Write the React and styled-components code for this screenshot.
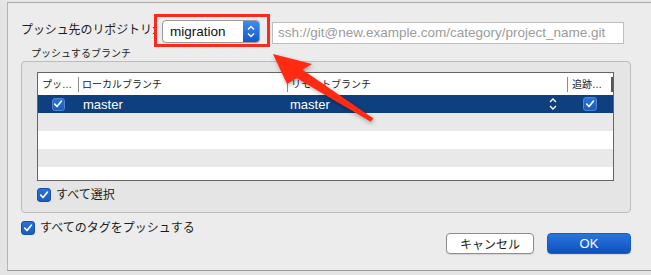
import React from 'react';
import styled, {createGlobalStyle} from 'styled-components';

const Font = `"Liberation Sans", "Noto Sans CJK JP", sans-serif`;

const Global = createGlobalStyle`
	html, body {
		margin: 0;
		padding: 0;
		background: #e6e6e6;
		overflow: hidden;
	}
	* {
		box-sizing: border-box;
	}
`;

const Screen = styled.div`
	position: relative;
	width: 651px;
	height: 275px;
	background: #e4e4e4;
	font-family: ${Font};
	color: #1c1c1c;
`;
const Dialog = styled.div`
	margin-left: 7px;
	margin-top: 2px;
	height: 269px;
	background: #ececec;
	border-top: 1px solid #a9a9a9;
	border-left: 1px solid #b4b4b4;
	border-bottom: 1px solid #9a9a9a;
	padding: 11px 20px 0 13px;
	display: flex;
	flex-direction: column;
`;
const TopRow = styled.div`
	display: flex;
	align-items: flex-start;
	height: 33px;
`;
const Label = styled.div`
	width: 134px;
	margin-right: -1px;
	font-size: 12px;
	line-height: 33px;
	letter-spacing: -0.1px;
	white-space: nowrap;
`;
const Highlight = styled.div`
	position: relative;
	width: 116px;
	height: 33px;
	border: 3px solid #fb2a1c;
	padding: 3px 7px 1px 5px;
`;
const Popup = styled.div`
	display: flex;
	height: 23px;
	background: #fff;
	border: 1px solid #9c9c9c;
	border-radius: 4px;
	overflow: hidden;
	box-shadow: 0 1px 1px rgba(0,0,0,0.08);
`;
const PopupText = styled.div`
	flex: 1;
	padding-left: 7px;
	font-size: 13.5px;
	line-height: 21px;
	color: #111;
`;
const PopupStepper = styled.div`
	width: 16px;
	display: flex;
	align-items: center;
	justify-content: center;
	background: linear-gradient(#3d8cf2, #1458c8);
`;
const UrlField = styled.div`
	margin-left: 2px;
	margin-top: 8px;
	width: 352px;
	height: 22px;
	background: #fff;
	border: 1px solid #bdbdbd;
	padding-left: 5px;
	font-size: 13.5px;
	line-height: 20px;
	color: #9b9b9b;
	white-space: nowrap;
	overflow: hidden;
`;
const SectionTitle = styled.div`
	margin-left: 10px;
	font-size: 10px;
	line-height: 14px;
	color: #222;
`;
const Group = styled.div`
	height: 152px;
	background: #e5e5e5;
	border: 1px solid #bcbcbc;
	border-radius: 4px;
	padding: 10px 16px 0 15px;
	display: flex;
	flex-direction: column;
	gap: 7px;
`;
const Table = styled.div`
	height: 109px;
	background: #fff;
	border: 1px solid #656565;
	overflow: hidden;
`;
const Columns = `40px 209px 280px 1fr`;
const HeaderRow = styled.div`
	display: grid;
	grid-template-columns: ${Columns};
	height: 22px;
	align-items: center;
	background: #fff;
`;
const HeaderCell = styled.div`
	height: 15px;
	line-height: 15px;
	font-size: 10px;
	color: #222;
	padding-left: ${p => p.$pad || 3}px;
	border-left: ${p => p.$divider ? '1px solid #8c8c8c' : 'none'};
	border-right: ${p => p.$end ? '2px solid #555' : 'none'};
	white-space: nowrap;
	overflow: hidden;
`;
const Row = styled.div`
	display: grid;
	grid-template-columns: ${Columns};
	height: 18px;
	align-items: center;
	background: ${p => p.$selected ? '#0e3f7e' : p.$alt ? '#e9e9e9' : '#fff'};
	color: ${p => p.$selected ? '#fff' : '#1c1c1c'};
`;
const Cell = styled.div`
	display: flex;
	align-items: center;
	justify-content: ${p => p.$center ? 'center' : 'space-between'};
	padding-left: ${p => p.$center ? 0 : p.$pad || 4}px;
	padding-right: ${p => p.$right || 0}px;
	font-size: 13px;
	height: 18px;
`;
const Box = styled.div`
	width: ${p => p.$size || 14}px;
	height: ${p => p.$size || 14}px;
	border-radius: 3px;
	background: linear-gradient(#2a71d6, #1a5cc0);
	border: 1px solid ${p => p.$light ? '#4d86d6' : '#1750a8'};
	display: flex;
	align-items: center;
	justify-content: center;
	flex-shrink: 0;
`;
const CheckRow = styled.div`
	display: flex;
	align-items: center;
	gap: 5px;
	font-size: 12px;
	line-height: 14px;
	margin-top: ${p => p.$top || 0}px;
`;
const BottomArea = styled.div`
	display: flex;
	justify-content: space-between;
	align-items: flex-start;
`;
const Buttons = styled.div`
	display: flex;
	gap: 13px;
	margin-top: 20px;
`;
const Button = styled.div`
	width: ${p => p.$w}px;
	height: 21px;
	border-radius: 4px;
	display: flex;
	align-items: center;
	justify-content: center;
	font-size: ${p => p.$primary ? 13 : 12}px;
	color: ${p => p.$primary ? '#fff' : '#1c1c1c'};
	background: ${p => p.$primary ? 'linear-gradient(#2b74de, #0d52bc)' : '#fff'};
	border: 1px solid ${p => p.$primary ? '#1a5cc4' : '#8e8e8e'};
	box-shadow: 0 1px 1px rgba(0,0,0,0.1);
`;
const Overlay = styled.svg`
	position: absolute;
	top: 0;
	left: 0;
	pointer-events: none;
	filter: drop-shadow(1px 2px 2px rgba(0,0,0,0.3));
`;

const Check = ({size = 14, light}) => (
	<Box $size={size} $light={light}>
		<svg width="10" height="10" viewBox="0 0 10 10">
			<path d="M1.8 5.2 L4 7.5 L8.3 2.2" fill="none" stroke="#fff" strokeWidth="1.7" strokeLinecap="round" strokeLinejoin="round" />
		</svg>
	</Box>
);

const Stepper = ({w, h, color}) => (
	<svg width={w} height={h} viewBox={`0 0 ${w} ${h}`}>
		<path d={`M${w/2 - 3} ${h/2 - 2} L${w/2} ${h/2 - 5} L${w/2 + 3} ${h/2 - 2}`} fill="none" stroke={color} strokeWidth="1.4" />
		<path d={`M${w/2 - 3} ${h/2 + 2} L${w/2} ${h/2 + 5} L${w/2 + 3} ${h/2 + 2}`} fill="none" stroke={color} strokeWidth="1.4" />
	</svg>
);

const rows = [
	{selected: true},
	{alt: true},
	{},
	{alt: true},
	{},
];

export default function App() {
	return (
		<Screen>
			<Global />
			<Dialog>
				<TopRow>
					<Label>プッシュ先のリポジトリ:</Label>
					<Highlight>
						<Popup>
							<PopupText>migration</PopupText>
							<PopupStepper>
								<Stepper w={16} h={21} color="#fff" />
							</PopupStepper>
						</Popup>
					</Highlight>
					<UrlField>ssh://git@new.example.com/category/project_name.git</UrlField>
				</TopRow>
				<SectionTitle>プッシュするブランチ</SectionTitle>
				<Group>
					<Table>
						<HeaderRow>
							<HeaderCell $pad={4}>プッ…</HeaderCell>
							<HeaderCell $divider>ローカルブランチ</HeaderCell>
							<HeaderCell $divider>リモートブランチ</HeaderCell>
							<HeaderCell $divider $pad={4} $end>追跡…</HeaderCell>
						</HeaderRow>
						{rows.map((r, i) => (
							<Row key={i} $selected={r.selected} $alt={r.alt}>
								{r.selected ? (
									<>
										<Cell $center><Check size={13} light /></Cell>
										<Cell $pad={5}>master</Cell>
										<Cell $pad={3} $right={10}>
											master
											<Stepper w={8} h={16} color="#fff" />
										</Cell>
										<Cell $center><Check size={14} light /></Cell>
									</>
								) : null}
							</Row>
						))}
					</Table>
					<CheckRow>
						<Check />
						すべて選択
					</CheckRow>
				</Group>
				<BottomArea>
					<CheckRow $top={8}>
						<Check />
						すべてのタグをプッシュする
					</CheckRow>
					<Buttons>
						<Button $w={88}>キャンセル</Button>
						<Button $w={84} $primary>OK</Button>
					</Buttons>
				</BottomArea>
			</Dialog>
			<Overlay width="651" height="275" viewBox="0 0 651 275">
				<polygon
					points="273,52 312,62 302.5,67.8 373.2,116.2 370.8,119.8 296.7,76.2 287,82"
					fill="#ff2a12"
				/>
			</Overlay>
		</Screen>
	);
}
